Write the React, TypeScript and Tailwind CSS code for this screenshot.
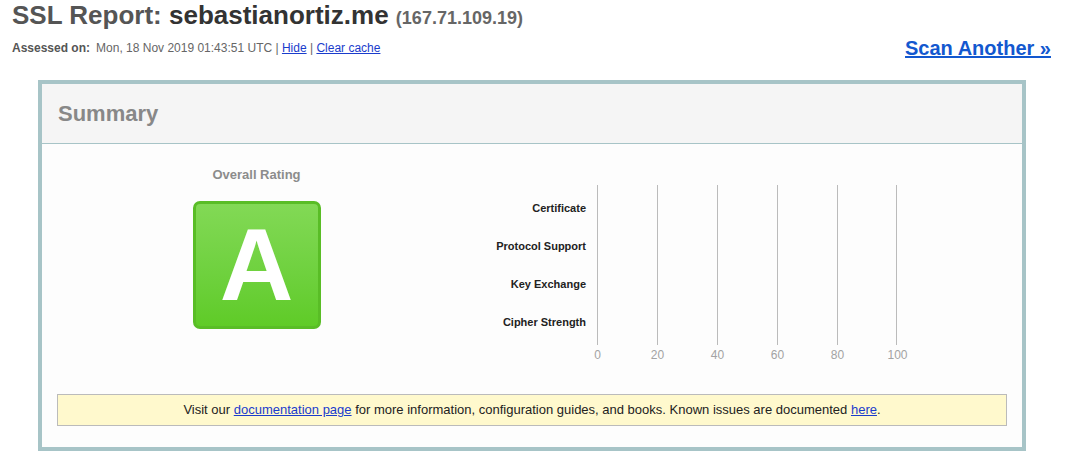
import React from 'react';

const rows = ['Certificate', 'Protocol Support', 'Key Exchange', 'Cipher Strength'];
const ticks = [0, 20, 40, 60, 80, 100];

function RatingChart() {
  return (
    <div className="flex mt-[18px]">
      {/* row labels */}
      <div className="w-[130px] pt-[4px]">
        {rows.map((r) => (
          <div key={r} className="h-[38px] flex items-center justify-end text-[11px] font-bold text-[#222]">
            {r}
          </div>
        ))}
      </div>
      <div className="ml-[11px]">
        <div className="flex h-[160px]">
          {ticks.slice(0, 5).map((t, i) => (
            <div
              key={t}
              className={
                i === 4
                  ? 'w-[60px] border-l border-r border-[#bbb]'
                  : 'w-[60px] border-l border-[#bbb]'
              }
            />
          ))}
        </div>
        <div className="flex ml-[-29.5px] mt-[3px]">
          {ticks.map((t) => (
            <div key={t} className="w-[60px] text-center text-[12px] leading-[14px] text-[#a3a3a3]">
              {t}
            </div>
          ))}
        </div>
      </div>
    </div>
  );
}

export default function App() {
  return (
    <div className="bg-white min-h-[467px] font-['Liberation_Sans',Arial,sans-serif]">
      {/* page header */}
      <div className="flex justify-between items-start">
        <div className="pl-[12px]">
          <h1 className="text-[26px] leading-[30px] font-bold text-[#555] whitespace-nowrap">
            SSL Report: <span className="text-[#333]">sebastianortiz.me</span>{' '}
            <span className="text-[18px] text-[#666]">(167.71.109.19)</span>
          </h1>
          <div className="mt-[7px] text-[12px] leading-[16px] text-[#666]">
            <span className="font-bold text-[#555]">Assessed on:</span>
            <span className="ml-[6px]">Mon, 18 Nov 2019 01:43:51 UTC | </span>
            <a href="#" className="text-[#1a3ccc] underline">Hide</a>
            <span> | </span>
            <a href="#" className="text-[#1a3ccc] underline">Clear cache</a>
          </div>
        </div>
        <a
          href="#"
          className="mt-[36px] mr-[14px] text-[20px] leading-[24px] font-bold text-[#1358cf] underline"
        >
          Scan Another »
        </a>
      </div>

      {/* summary box */}
      <div className="ml-[38px] mt-[20px] w-[988px] border-[4px] border-[#a7c4c7] bg-[#fdfdfd]">
        <div className="h-[60px] bg-[#f5f5f5] border-b border-[#a7c4c7] flex items-center pl-[16px]">
          <div className="text-[22px] font-bold text-[#888]">Summary</div>
        </div>
        <div className="pt-[23px] px-[15px] pb-[21px]">
          <div className="flex">
            <div className="w-[399px] flex flex-col items-center">
              <div className="text-[13px] leading-[16px] font-bold text-[#8c8c8c]">Overall Rating</div>
              <div className="mt-[18px] w-[128px] h-[128px] rounded-[7px] border-[3px] border-[#59bd26] bg-gradient-to-b from-[#82d955] to-[#5fcb27] flex items-center justify-center">
                <span className="text-[102px] leading-none font-bold text-white">A</span>
              </div>
            </div>
            <RatingChart />
          </div>
          <div className="mt-[32px] h-[32px] border border-[#bbb] bg-[#fff9cd] flex items-center justify-center text-[13px] text-[#222]">
            <span>
              Visit our{' '}
              <a href="#" className="text-[#1a3ccc] underline">documentation page</a>{' '}
              for more information, configuration guides, and books. Known issues are documented{' '}
              <a href="#" className="text-[#1a3ccc] underline">here</a>.
            </span>
          </div>
        </div>
      </div>
    </div>
  );
}
